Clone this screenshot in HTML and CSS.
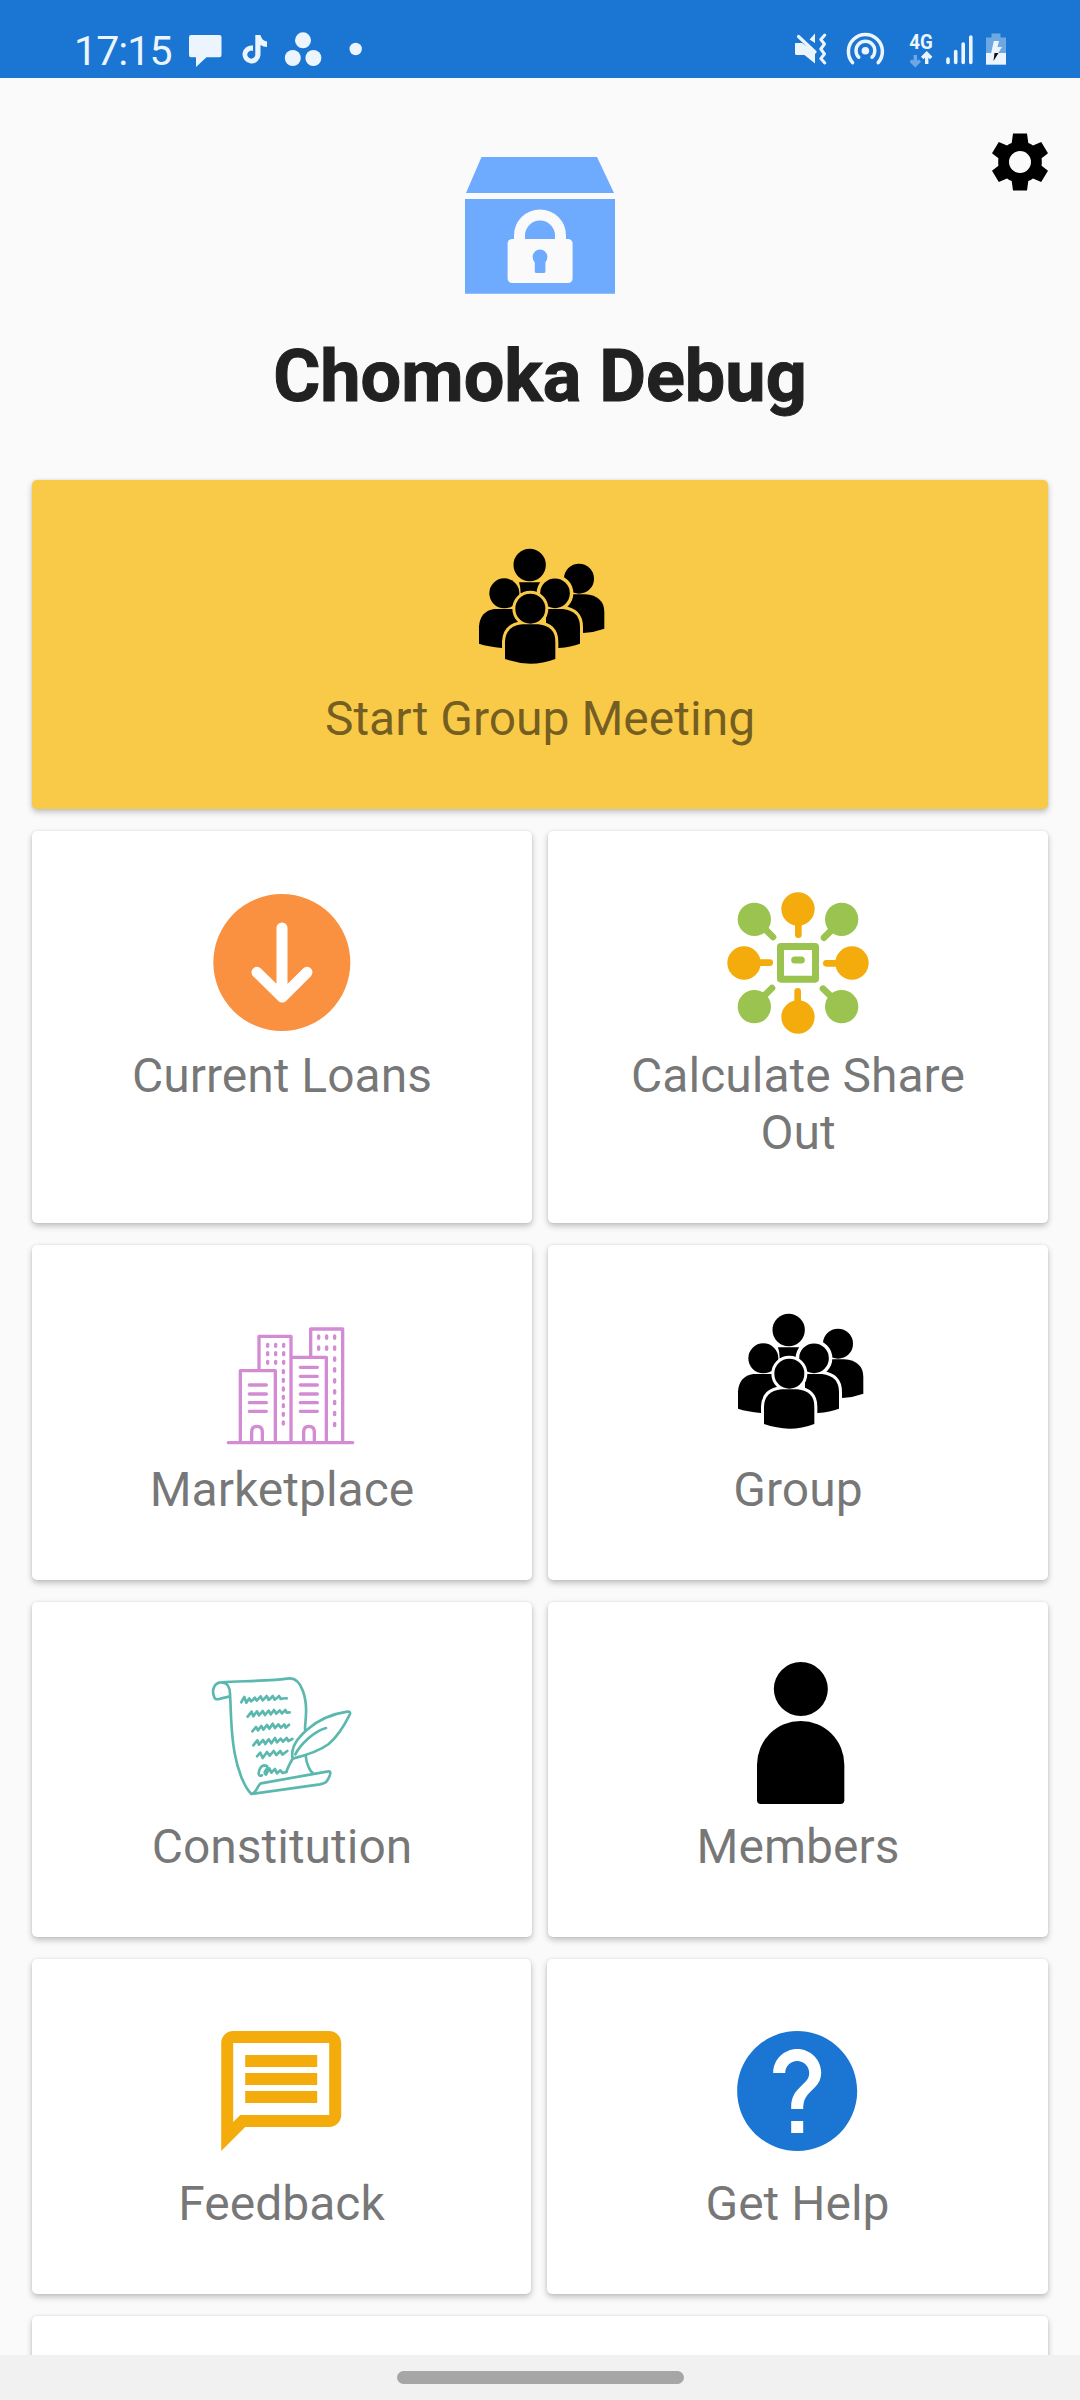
FILE: index.html
```html
<!DOCTYPE html>
<html lang="en">
<head>
<meta charset="utf-8">
<title>Chomoka Debug</title>
<link rel="stylesheet" href="styles.css">
</head>
<body>
<svg class="defs" aria-hidden="true">
  <symbol id="people" viewBox="0 0 150 150">
    <g transform="translate(-13 -11) scale(.33333)">
      <circle cx="236" cy="120" r="48.500"/>
      <path d="M204 172H268Q263 186 263 205H209Q209 186 204 172Z"/>
      <circle cx="384" cy="161" r="45"/>
      <path d="M330 208H402Q460 212 460 262V311Q430 322 397 324L350 250Z"/>
      <circle class="halo" cx="312" cy="205" r="46"/>
      <path class="halo" d="M285 252H336Q387 258 387 306V356Q360 366 324 369L290 330Z"/>
      <circle cx="312" cy="205" r="44.500"/>
      <circle cx="160" cy="205" r="45"/>
      <path d="M130 252H230V369H152Q112 365 84 356V304Q88 258 130 252Z"/>
      <path d="M285 252H336Q387 258 387 306V356Q360 366 324 369H285Z"/>
      <circle class="halo" cx="238" cy="251" r="45"/>
      <path class="halo" d="M214 298H262Q313 303 313 350V402Q276 416 238 416Q200 415 162 402V350Q164 303 214 298Z"/>
      <circle cx="238" cy="251" r="45"/>
      <path d="M214 298H262Q313 303 313 350V402Q276 416 238 416Q200 415 162 402V350Q164 303 214 298Z"/>
    </g>
  </symbol>
</svg>

<header class="status">
  <div class="status-left">
    <span class="time">17:15</span>
    <svg class="notif" width="190" height="78" viewBox="180 0 190 78">
      <path d="M191 35H219.500Q221.500 35 221.500 37V55Q221.500 57.300 219.500 57.300H206.500L196 67V57.300H191Q189 57.300 189 55V37Q189 35 191 35Z"/>
      <path d="M255.300 35H260.500Q261.500 40.500 267 41.500V47Q263.500 47 260.500 45V55A9 9 0 1 1 253 45.600V51A4 4 0 1 0 255.300 55Z"/>
      <circle cx="303" cy="40.300" r="8"/><circle cx="292.800" cy="58" r="8"/><circle cx="313.400" cy="58" r="8"/>
      <circle cx="355.700" cy="49" r="6.200"/>
    </svg>
  </div>
  <svg class="system" width="230" height="78" viewBox="785 0 230 78">
    <path d="M795.500 43H802L815 51.500V63.500L804.500 55H796.500Q795 55 795 53.500V43.500ZM809.600 39.500L815 33.600V43Z"/>
    <path class="line" d="M798.500 36.500L815 52" stroke-width="3.200"/>
    <path class="line" d="M824.800 35L820.800 39.500L824.500 44L820.800 49L824.500 54L820.800 58.600L824.800 63" stroke-width="3"/>
    <circle cx="865.400" cy="50.800" r="3.800"/>
    <path class="line" d="M858.800 57.300A9.400 9.400 0 1 1 872 57.300" stroke-width="3.400"/>
    <path class="line" d="M852.600 62.700A17 17 0 1 1 878.200 62.700" stroke-width="3.500"/>
    <text x="909.300" y="48.600" textLength="23.500" lengthAdjust="spacingAndGlyphs">4G</text>
    <path class="arrow dim" d="M915.300 55V65M910.800 60.500L915.300 65L919.800 60.500"/>
    <path class="arrow" d="M926.700 64V54M922.200 58L926.700 53.500L931.200 58"/>
    <path class="bars" d="M948 59V62.500M955.700 51.500V62.500M963.200 44V62.500M970.800 37V62.500"/>
    <path class="dim" d="M991.500 33.500H1000.500V37.500H1006V53H986V37.500H991.500Z"/>
    <path d="M986 53H1006V64.700H986Z"/>
    <path d="M993.800 41H999L997.500 47H1002L998 53.500H991Z"/>
    <path class="ink" d="M994.500 53H998.500L993.500 61Z"/>
  </svg>
</header>

<main class="content">
  <div class="hero">
    <svg class="logo" width="150" height="137" viewBox="465 157 150 137">
      <path d="M481.500 157H597L614 193H466Z"/>
      <path d="M465 199H615V293.700H465Z"/>
      <path class="shackle" d="M519.500 241V235.500A20.500 20.500 0 0 1 560.500 235.500V241"/>
      <rect class="lock" x="507.600" y="239" width="65" height="44" rx="4.500"/>
      <circle cx="540" cy="257" r="7.400"/>
      <rect x="534.800" y="259" width="10.600" height="14" rx="1.500"/>
    </svg>
    <h1>Chomoka Debug</h1>
    <svg class="gear" width="60" height="60" viewBox="-30 -30 60 60">
      <path fill-rule="evenodd" d="M-7 -28.600H7L8.300 -19Q10.800 -18.200 13 -16.400L21.200 -19.900L28 -8.700L21.600 -3.800Q22 0 21.600 3.800L28 8.700L21.200 19.900L13 16.400Q10.800 18.200 8.300 19L7 28.600H-7L-8.300 19Q-10.800 18.200 -13 16.400L-21.200 19.900L-28 8.700L-21.600 3.800Q-22 0 -21.600 -3.800L-28 -8.700L-21.200 -19.900L-13 -16.400Q-10.800 -18.200 -8.300 -19ZM0 -11A11 11 0 1 0 0 11A11 11 0 1 0 0 -11Z"/>
    </svg>
  </div>

  <section class="card meeting">
    <svg class="icon"><use href="#people"/></svg>
    <span class="label">Start Group Meeting</span>
  </section>

  <div class="row tall">
    <section class="card">
      <svg class="icon" viewBox="0 0 150 150">
        <g transform="translate(-27 -17) scale(.33333)">
          <circle cx="305.500" cy="277.500" r="205.500" fill="#fa9140"/>
          <path d="M306 174V372M231 307L306.500 381L381 307" fill="none" stroke="#fff" stroke-width="33" stroke-linecap="round" stroke-linejoin="round"/>
        </g>
      </svg>
      <span class="label">Current Loans</span>
    </section>
    <section class="card">
      <svg class="icon" viewBox="0 0 150 150">
        <g transform="translate(-23 -17) scale(.33333)" stroke-linecap="round">
          <g fill="#f4ab0c"><circle cx="294" cy="117" r="50"/><circle cx="132" cy="279" r="50"/><circle cx="456" cy="279" r="50"/><circle cx="294" cy="441" r="50"/></g>
          <path d="M295 150V194M160 278H209M430 280H379M293 410V364" stroke="#f4ab0c" stroke-width="20"/>
          <g fill="#9bc34f"><circle cx="163" cy="148" r="50"/><circle cx="425" cy="148" r="50"/><circle cx="163" cy="410" r="50"/><circle cx="425" cy="410" r="50"/></g>
          <path d="M185 167L219 201M405 170L372 203M188 382L216 354M400 386L369 356" stroke="#9bc34f" stroke-width="20"/>
          <rect x="241.500" y="229.500" width="105" height="98" rx="1" fill="none" stroke="#9bc34f" stroke-width="21" stroke-linejoin="round"/>
          <path d="M284 270H304" stroke="#9bc34f" stroke-width="21"/>
        </g>
      </svg>
      <span class="label">Calculate Share Out</span>
    </section>
  </div>

  <div class="row">
    <section class="card">
      <svg class="icon" viewBox="0 0 150 150">
        <g transform="translate(-7 -1) scale(.33333)" fill="none" stroke="#d38bd3" stroke-width="10" stroke-linecap="round" stroke-linejoin="round">
          <path d="M85 428H458M121 426V212H226V426M177 208V109H273V426M277 172H379V426M332 168V87H428V426"/>
          <path d="M155 425V396Q155 379 171 379Q187 379 187 396V425M311 425V396Q311 379 327 379Q343 379 343 396V425"/>
          <path d="M148 255H199M148 282H199M148 308H199M148 334H199M301 202H352M301 229H352M301 255H352M301 282H352M301 308H352M301 334H352"/>
          <path d="M203 133V139M227 133V139M251 133V139M203 158V164M227 158V164M251 158V164M203 184V190M227 184V190M251 184V190M250 212V218M250 238V244M250 264V270M250 289V295M250 314V320M250 340V346M250 366V372M356 108V115M380 108V115M404 108V115M356 141V148M380 141V148M404 141V148M404 174V181M404 206V213M404 239V246M404 272V279M404 304V311M404 337V344M404 370V377"/>
        </g>
      </svg>
      <span class="label">Marketplace</span>
    </section>
    <section class="card group">
      <svg class="icon"><use href="#people"/></svg>
      <span class="label">Group</span>
    </section>
  </div>

  <div class="row">
    <section class="card">
      <svg class="icon" viewBox="0 0 150 150">
        <g transform="translate(-17 -8) scale(.33333)" fill="none" stroke="#5bb8ae" stroke-width="8" stroke-linecap="round" stroke-linejoin="round">
          <path d="M95 97C160 93 240 93 299 85C337 84 350 150 348 190C348 215 343 230 346 243M95 97C72 97 66 120 71 136C74 150 80 149 91 146L117 140M95 97C112 97 120 113 120 132C123 170 121 240 134 310C143 360 162 410 184 432C201 428 202 405 213 400L415 364C423 362 422 372 417 382C410 399 402 401 390 403L184 432M347 315C348 340 360 365 371 372"/>
          <path d="M308 326C300 290 326 262 350 240C384 210 430 191 472 185C482 184 482 190 478 196C463 226 442 260 416 282C384 306 340 318 308 326M316 313C330 284 370 245 408 234M308 326C300 340 294 350 289 366"/>
          <path d="M154 157Q158 148 163 141Q166 150 169 158Q174 151 178 145Q181 150 183 154Q190 149 194 143Q197 147 200 152Q207 145 212 139Q215 146 218 151Q225 145 230 138Q234 144 236 150Q244 144 248 138Q252 144 254 149Q262 144 267 138Q270 142 272 147Q281 144 290 145"/>
          <path d="M173 200L185 185L190 199L201 184L207 196L218 183L225 195L236 182L242 193L252 180L259 191L269 181L276 190L286 180L290 188L299 187"/>
          <path d="M187 244L198 231L204 241L214 228L220 239L231 225L238 236L248 221L255 234L265 223L273 233L283 223L287 233L297 224"/>
          <path d="M190 286L202 271L207 284L219 270L226 282L236 268L244 280L255 264L261 277L272 266L279 275L290 264L295 273L307 267"/>
          <path d="M201 319L211 308L218 324L231 306L239 317L251 303L259 315L271 303L277 314L292 303"/>
          <path d="M216 376Q207 380 206 371Q207 351 222 346Q238 347 229 358Q220 369 228 374L238 355L244 368L255 357L261 370L271 361L278 369L289 366"/>
        </g>
      </svg>
      <span class="label">Constitution</span>
    </section>
    <section class="card">
      <svg class="icon" viewBox="0 0 150 150">
        <g transform="translate(-203 -98) scale(.33333)">
          <circle cx="842.500" cy="387" r="81"/>
          <path d="M711 614A131 131 0 0 1 973 614V721Q973 732 962 732H722Q711 732 711 721Z"/>
        </g>
      </svg>
      <span class="label">Members</span>
    </section>
  </div>

  <div class="row last">
    <section class="card">
      <svg class="icon" viewBox="0 0 150 150">
        <path transform="translate(2.200 4) scale(6)" fill="#f4ab0c" fill-rule="evenodd" d="M4 4h16v12H5.170L4 17.170V4m0-2c-1.100 0-1.990.900-1.990 2L2 22l4-4h14c1.100 0 2-.900 2-2V4c0-1.100-.900-2-2-2H4zM6 12h12v2H6zM6 9h12v2H6zM6 6h12v2H6z"/>
      </svg>
      <span class="label">Feedback</span>
    </section>
    <section class="card">
      <svg class="icon" viewBox="0 0 150 150">
        <path transform="translate(2.200 4) scale(6)" fill="#1a76d2" d="M12 2C6.480 2 2 6.480 2 12s4.480 10 10 10 10-4.480 10-10S17.520 2 12 2zm1 17h-2v-2h2v2zm2.070-7.750l-.900.920C13.450 12.900 13 13.500 13 15h-2v-.500c0-1.100.450-2.100 1.170-2.830l1.240-1.260c.370-.360.590-.860.590-1.410 0-1.100-.900-2-2-2s-2 .900-2 2H8c0-2.210 1.790-4 4-4s4 1.790 4 4c0 .880-.360 1.680-.930 2.250z"/>
      </svg>
      <span class="label">Get Help</span>
    </section>
  </div>

  <section class="card more"></section>
</main>

<footer class="navbar"><span class="pill"></span></footer>
</body>
</html>
```

FILE: styles.css
```css
* { box-sizing: border-box; }

body {
  margin: 0;
  height: 2400px;
  display: flex;
  flex-direction: column;
  overflow: hidden;
  background: #fafafa;
  font-family: Roboto, "Liberation Sans", sans-serif;
}

svg { display: block; }

.defs { display: none; }

.status {
  flex: none;
  height: 78px;
  padding: 0 65px 0 74px;
  display: flex;
  justify-content: space-between;
  background: #1a76d2;
  color: #ecf4fd;
}

.status svg { fill: #ecf4fd; }

.status-left { display: flex; }

.time {
  width: 106px;
  padding-top: 27px;
  font-size: 41px;
  line-height: 48px;
  letter-spacing: -0.9px;
}

.system text { font-size: 20px; font-weight: 700; }
.system .line { fill: none; stroke: #ecf4fd; stroke-linecap: round; stroke-linejoin: round; }
.system .arrow { fill: none; stroke: #ecf4fd; stroke-width: 3.400px; }
.system .bars { fill: none; stroke: #ecf4fd; stroke-width: 3.600px; stroke-linecap: round; }
.system .dim { opacity: 0.4; }
.system .ink { fill: #111; }

.content {
  flex: 1;
  min-height: 0;
  padding: 0 32px;
  display: flex;
  flex-direction: column;
  gap: 22px;
  overflow: hidden;
}

.hero {
  position: relative;
  flex: none;
  height: 380px;
  padding-top: 79px;
  display: flex;
  flex-direction: column;
  align-items: center;
}

.logo { fill: #6eaafd; }
.logo .lock { fill: #fafafa; }
.logo .shackle { fill: none; stroke: #fafafa; stroke-width: 11px; }

h1 {
  margin: 41px 0 0;
  font-size: 72px;
  line-height: 84px;
  font-weight: 700;
  color: #212121;
  white-space: nowrap;
  -webkit-text-stroke: 1px #212121;
}

.gear {
  position: absolute;
  top: 54px;
  right: -2px;
}

.row {
  flex: none;
  height: 335px;
  display: grid;
  grid-template-columns: 1fr 1fr;
  gap: 16px;
}

.row.tall { height: 392px; }
.row.last { grid-template-columns: 499px 501px; }

.card {
  flex: none;
  padding: 56px 60px 0;
  display: flex;
  flex-direction: column;
  align-items: center;
  gap: 10px;
  border-radius: 5px;
  background: #fff;
  box-shadow: 0 3px 6px rgba(0, 0, 0, 0.24), 0 0 3px rgba(0, 0, 0, 0.08);
}

.meeting {
  height: 329px;
  gap: 4px;
  background: #f9ca48;
  --halo: #f9ca48;
}

.meeting .icon { margin-right: 2px; }

.group { --halo: #fff; }

.more { height: 335px; }

.icon { flex: none; width: 150px; height: 150px; }

.halo { fill: var(--halo); stroke: var(--halo); stroke-width: 18px; }

.label {
  font-size: 48px;
  line-height: 57px;
  text-align: center;
  color: rgba(0, 0, 0, 0.54);
}

.navbar {
  flex: none;
  height: 45px;
  padding-top: 16px;
  background: #f1f1f1;
}

.pill {
  display: block;
  width: 287px;
  height: 13px;
  margin: 0 auto;
  border-radius: 7px;
  background: #a6a6a6;
}
```
